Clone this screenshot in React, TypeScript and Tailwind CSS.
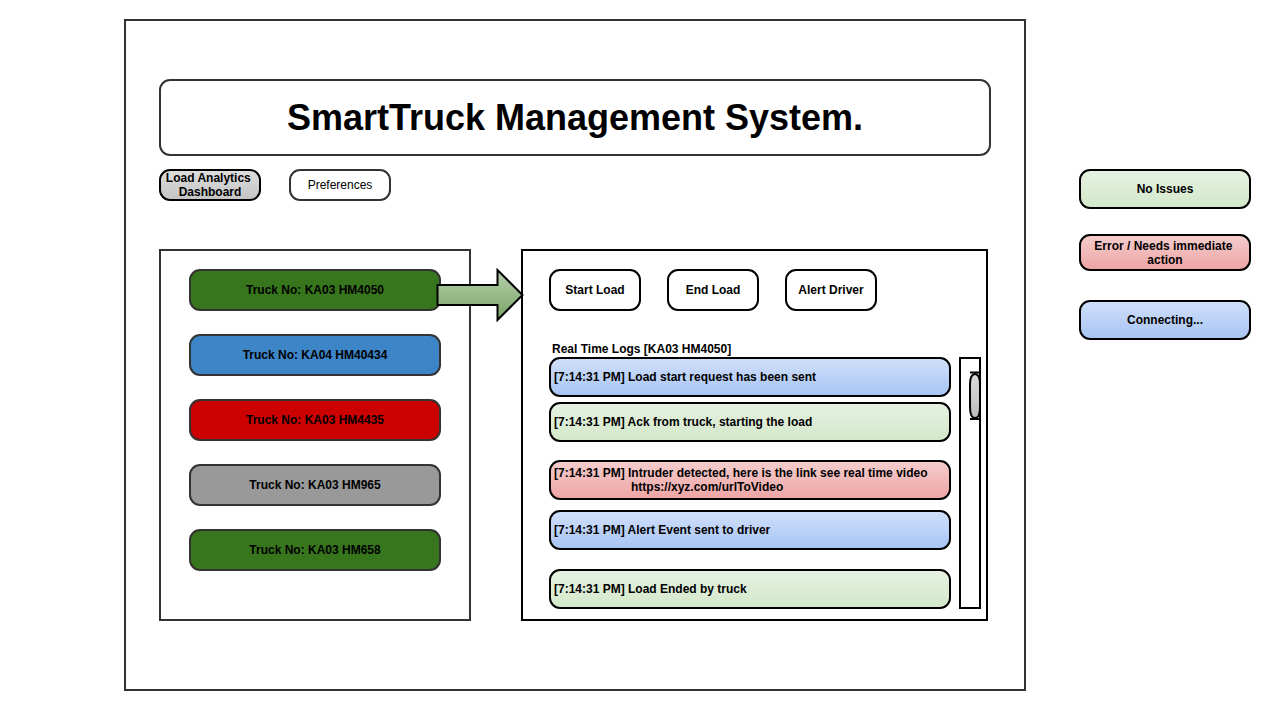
type Tone = "ok" | "error" | "pending";

const toneClass: Record<Tone, string> = {
  ok: "from-[#e6f1e1] to-[#d3e8ca]",
  error: "from-[#f4cccc] to-[#eea5a5]",
  pending: "from-[#d0dffa] to-[#a8c5f4]",
};

const trucks = [
  { name: "KA03 HM4050", color: "bg-[#38761d]" },
  { name: "KA04 HM40434", color: "bg-[#3d85c6]" },
  { name: "KA03 HM4435", color: "bg-[#cc0000]" },
  { name: "KA03 HM965", color: "bg-[#999999]" },
  { name: "KA03 HM658", color: "bg-[#38761d]" },
];

const logs: { text: string; link?: string; tone: Tone; space: string }[] = [
  { text: "Load start request has been sent", tone: "pending", space: "" },
  { text: "Ack from truck, starting the load", tone: "ok", space: "mt-[5px]" },
  {
    text: "Intruder detected, here is the link see real time video",
    link: "https://xyz.com/urlToVideo",
    tone: "error",
    space: "mt-[18px]",
  },
  { text: "Alert Event sent to driver", tone: "pending", space: "mt-[10px]" },
  { text: "Load Ended by truck", tone: "ok", space: "mt-[19px]" },
];

const legend: { lines: string[]; tone: Tone; space: string }[] = [
  { lines: ["No Issues"], tone: "ok", space: "h-10" },
  { lines: ["Error / Needs immediate\u00a0", "action"], tone: "error", space: "mt-[25px] h-[37px]" },
  { lines: ["Connecting..."], tone: "pending", space: "mt-[29px] h-10" },
];

function Arrow() {
  return (
    <svg
      className="absolute top-[17px] left-[-87px] h-[54px] w-[88px]"
      viewBox="0 0 88 54"
      aria-hidden="true"
    >
      <defs>
        <linearGradient id="arrow-fill" x1="0" y1="0" x2="0" y2="1">
          <stop offset="0" stopColor="#b6d0aa" />
          <stop offset="1" stopColor="#7aa368" />
        </linearGradient>
      </defs>
      <path
        d="M1.5 17H61.5V2L86.5 27L61.5 52V37H1.5Z"
        fill="url(#arrow-fill)"
        stroke="#000"
        strokeWidth="2"
        strokeMiterlimit="10"
      />
    </svg>
  );
}

function ScrollTrack() {
  return (
    <div className="flex w-[22px] shrink-0 justify-end border-2 border-black pt-3">
      <svg className="h-[50px] w-[11px]" viewBox="0 0 11 50" aria-hidden="true">
        <defs>
          <linearGradient id="thumb-fill" x1="0" y1="0" x2="0" y2="1">
            <stop offset="0" stopColor="#dadada" />
            <stop offset="1" stopColor="#bcbcbc" />
          </linearGradient>
        </defs>
        <path
          d="M2 14Q2 3 7 3Q12 3 12 14V36Q12 47 7 47Q2 47 2 36Z"
          fill="url(#thumb-fill)"
          stroke="#000"
          strokeWidth="2"
        />
        <path d="M2 1.5H11M2 48H11" stroke="#000" strokeWidth="2" />
      </svg>
    </div>
  );
}

export default function App() {
  return (
    <div className="flex items-start gap-[53px] bg-white pt-[19px] pr-[21px] pb-[19px] pl-[124px] font-['Liberation_Sans',Arial,sans-serif] text-[12px] leading-[14px] font-bold text-black">
      <main className="min-w-0 flex-1 border-2 border-[#333333] px-[33px] pt-[58px] pb-[68px]">
        <h1 className="flex h-[77px] items-center justify-center rounded-[11px] border-2 border-[#333333] text-[36px] leading-[42px]">
          SmartTruck Management System.
        </h1>

        <nav className="mt-[13px] flex gap-7">
          <button
            type="button"
            className="h-8 w-[102px] rounded-[11px] border-2 border-black bg-linear-to-b from-[#dddddd] to-[#c4c4c4]"
          >
            Load Analytics{"\u00a0"}
            <br />
            Dashboard
          </button>
          <button
            type="button"
            className="h-8 w-[102px] rounded-[11px] border-2 border-[#333333] font-normal"
          >
            Preferences
          </button>
        </nav>

        <div className="mt-12 flex gap-[50px] pr-[3px]">
          <section className="w-[312px] shrink-0 border-2 border-[#333333] px-7 pt-[18px] pb-12">
            <ul className="flex flex-col gap-[23px]">
              {trucks.map((truck) => (
                <li key={truck.name}>
                  <button
                    type="button"
                    className={`h-[42px] w-full rounded-[11px] border-2 border-[#333333] ${truck.color}`}
                  >
                    Truck No: {truck.name}
                  </button>
                </li>
              ))}
            </ul>
          </section>

          <section className="relative min-w-0 flex-1 border-2 border-black pt-[18px] pr-[5px] pl-[26px]">
            <Arrow />
            <div className="flex gap-[26px]">
              {["Start Load", "End Load", "Alert Driver"].map((label) => (
                <button
                  key={label}
                  type="button"
                  className="h-[42px] w-[92px] rounded-[11px] border-2 border-black"
                >
                  {label}
                </button>
              ))}
            </div>

            <h2 className="mt-[31px] pb-px pl-[3px]">Real Time Logs [KA03 HM4050]</h2>
            <div className="flex gap-2">
              <ul className="min-w-0 flex-1">
                {logs.map((log) => (
                  <li
                    key={log.text}
                    className={`flex h-10 flex-col justify-center rounded-[11px] border-2 border-black bg-linear-to-b pl-[3px] ${toneClass[log.tone]} ${log.space}`}
                  >
                    <p>[7:14:31 PM] {log.text}</p>
                    {log.link && (
                      <a href={log.link} className="pl-[77px]">
                        {log.link}
                      </a>
                    )}
                  </li>
                ))}
              </ul>
              <ScrollTrack />
            </div>
          </section>
        </div>
      </main>

      <aside className="w-[172px] shrink-0 pt-[150px]">
        <ul>
          {legend.map((item) => (
            <li
              key={item.tone}
              className={`flex flex-col items-center justify-center rounded-[11px] border-2 border-black bg-linear-to-b ${toneClass[item.tone]} ${item.space}`}
            >
              {item.lines.map((line) => (
                <span key={line}>{line}</span>
              ))}
            </li>
          ))}
        </ul>
      </aside>
    </div>
  );
}
